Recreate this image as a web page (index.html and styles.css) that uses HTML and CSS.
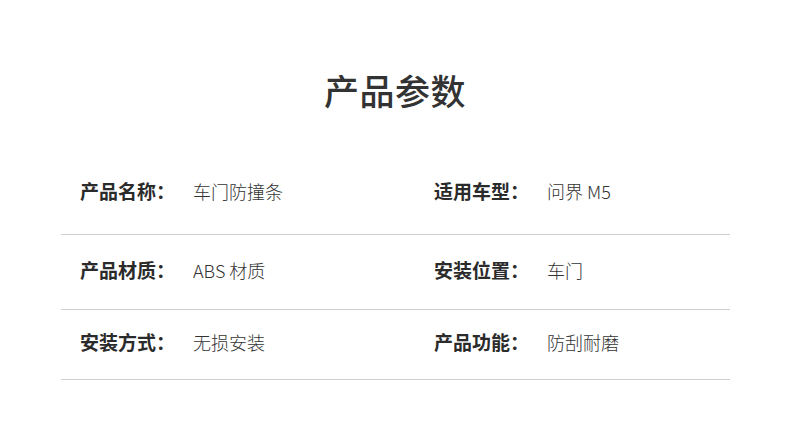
FILE: index.html
```html
<!DOCTYPE html>
<html lang="zh-CN">
<head>
<meta charset="utf-8">
<link rel="stylesheet" href="styles.css">
</head>
<body>
<div class="page">
  <h1 class="title">产品参数</h1>
  <div class="table">
    <div class="row row-first">
      <div class="cell"><span class="label">产品名称：</span><span class="value">车门防撞条</span></div>
      <div class="cell"><span class="label">适用车型：</span><span class="value">问界 M5</span></div>
    </div>
    <div class="row row-mid">
      <div class="cell"><span class="label">产品材质：</span><span class="value">ABS 材质</span></div>
      <div class="cell"><span class="label">安装位置：</span><span class="value">车门</span></div>
    </div>
    <div class="row row-last">
      <div class="cell"><span class="label">安装方式：</span><span class="value">无损安装</span></div>
      <div class="cell"><span class="label">产品功能：</span><span class="value">防刮耐磨</span></div>
    </div>
  </div>
</div>
</body>
</html>
```
FILE: styles.css
```css
html, body {
  margin: 0;
  padding: 0;
  background: #fff;
}
body {
  font-family: "Noto Sans CJK SC", "Noto Sans", sans-serif;
  color: #333;
  width: 790px;
  height: 421px;
  overflow: hidden;
}
.page {
  padding-top: 68px;
}
.title {
  margin: 0;
  text-align: center;
  font-size: 35px;
  line-height: 44px;
  font-weight: 500;
  color: #333;
  letter-spacing: 0.5px;
}
.table {
  margin: 59px 60px 0 61px;
}
.row {
  display: grid;
  grid-template-columns: 354px 1fr;
  padding-left: 19px;
  border-bottom: 1px solid #cfcfcf;
  align-items: center;
}
.row-first {
  height: 57px;
  padding-top: 6px;
  align-items: start;
}
.row-mid {
  height: 70px;
  padding-bottom: 4px;
}
.row-last {
  height: 63px;
  padding-bottom: 6px;
}
.cell {
  display: flex;
  align-items: center;
}
.label {
  width: 113px;
  font-size: 19px;
  font-weight: 700;
  color: #2b2b2b;
  line-height: 28px;
}
.value {
  font-size: 18px;
  font-weight: 300;
  color: #333;
  line-height: 28px;
}
```
